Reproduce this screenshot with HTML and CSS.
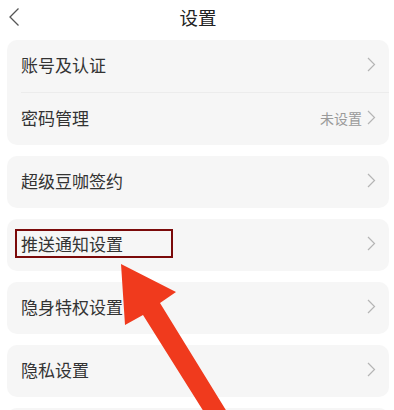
FILE: index.html
```html
<!DOCTYPE html>
<html lang="zh">
<head>
<meta charset="utf-8">
<link rel="stylesheet" href="styles.css">
</head>
<body>
<div class="page">
  <header class="header">
    <svg class="back" width="12" height="20" viewBox="0 0 12 20"><path d="M10.5 1.5 L2 10 L10.5 18.5" fill="none" stroke="#555" stroke-width="1.3"/></svg>
    <div class="title">设置</div>
  </header>
  <div class="list">
    <div class="card">
      <div class="row"><span class="label">账号及认证</span><svg class="chev" width="9" height="15" viewBox="0 0 9 15"><path d="M1 1 L7.5 7.5 L1 14" fill="none" stroke="#b5b5b5" stroke-width="1.2"/></svg></div>
      <div class="divider"></div>
      <div class="row"><span class="label">密码管理</span><span class="value">未设置</span><svg class="chev" width="9" height="15" viewBox="0 0 9 15"><path d="M1 1 L7.5 7.5 L1 14" fill="none" stroke="#b5b5b5" stroke-width="1.2"/></svg></div>
    </div>
    <div class="card">
      <div class="row"><span class="label">超级豆咖签约</span><svg class="chev" width="9" height="15" viewBox="0 0 9 15"><path d="M1 1 L7.5 7.5 L1 14" fill="none" stroke="#b5b5b5" stroke-width="1.2"/></svg></div>
    </div>
    <div class="card">
      <div class="row"><span class="label">推送通知设置</span><svg class="chev" width="9" height="15" viewBox="0 0 9 15"><path d="M1 1 L7.5 7.5 L1 14" fill="none" stroke="#b5b5b5" stroke-width="1.2"/></svg><span class="box"></span></div>
    </div>
    <div class="card">
      <div class="row"><span class="label">隐身特权设置</span><svg class="chev" width="9" height="15" viewBox="0 0 9 15"><path d="M1 1 L7.5 7.5 L1 14" fill="none" stroke="#b5b5b5" stroke-width="1.2"/></svg></div>
    </div>
    <div class="card">
      <div class="row"><span class="label">隐私设置</span><svg class="chev" width="9" height="15" viewBox="0 0 9 15"><path d="M1 1 L7.5 7.5 L1 14" fill="none" stroke="#b5b5b5" stroke-width="1.2"/></svg></div>
    </div>
    <div class="card">
      <div class="row"></div>
    </div>
  </div>
  <svg class="arrow" width="394" height="410" viewBox="0 0 394 410">
    <polygon points="121,264 176,292 160,303 232,420 209,420 143,315 125,325" fill="#f03a1d"/>
  </svg>
</div>
</body>
</html>
```
FILE: styles.css
```css
html, body {
  margin: 0;
  padding: 0;
  background: #fff;
}
.page {
  position: relative;
  width: 394px;
  height: 410px;
  overflow: hidden;
  font-family: "Noto Sans CJK SC", "Noto Sans", sans-serif;
  color: #333;
}
.header {
  height: 34px;
  display: flex;
  align-items: center;
  justify-content: center;
  position: relative;
}
.back {
  position: absolute;
  left: 8px;
  top: 7px;
}
.title {
  font-size: 18.5px;
  color: #222;
  line-height: 34px;
  margin-left: 2px;
}
.list {
  padding: 6px 5px 0 7px;
  display: flex;
  flex-direction: column;
  gap: 11px;
}
.card {
  background: #f6f6f6;
  border-radius: 10px;
}
.row {
  height: 52px;
  box-sizing: border-box;
  display: flex;
  align-items: center;
  padding: 0 13px 3px 14px;
  position: relative;
}
.label {
  font-size: 17px;
  line-height: 24px;
  flex: 1;
  color: #333;
}
.value {
  font-size: 14px;
  color: #9a9a9a;
  margin-right: 5px;
}
.chev {
  display: block;
}
.divider {
  height: 1px;
  background: #ececec;
  margin-left: 14px;
}
.box {
  position: absolute;
  left: 8px;
  top: 10px;
  width: 154px;
  height: 25px;
  border: 2px solid #7b0a0a;
}
.arrow {
  position: absolute;
  left: 0;
  top: 0;
  pointer-events: none;
}
```
